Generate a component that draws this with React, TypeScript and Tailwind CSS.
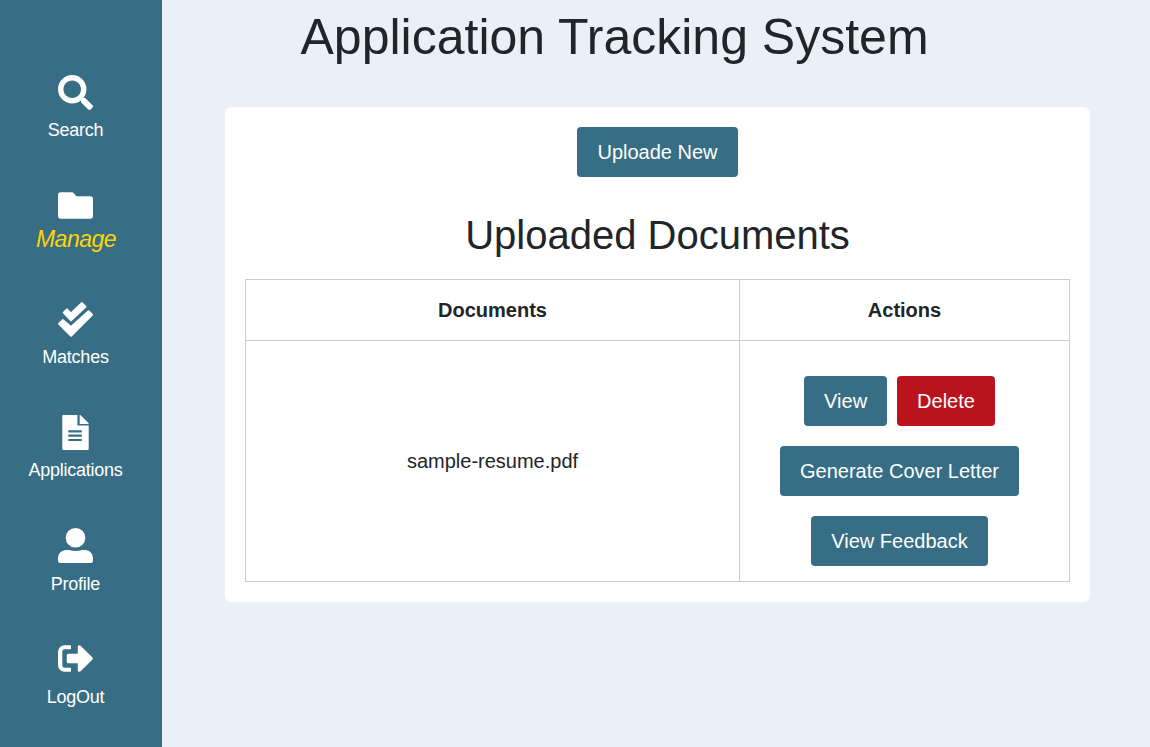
import type { ComponentType, ReactNode } from "react";
import { FaSearch } from "react-icons/fa";

type IconProps = { className?: string };

function FolderIcon({ className }: IconProps) {
  return (
    <svg viewBox="0 0 35 35" fill="currentColor" className={className}>
      <path d="M2.8 4.3H14.2Q15 4.3 15.6 4.9L18.4 8.3H32.3A2.7 2.7 0 0 1 35 11V28A2.7 2.7 0 0 1 32.3 30.7H2.7A2.7 2.7 0 0 1 0 28V7A2.7 2.7 0 0 1 2.8 4.3Z" />
    </svg>
  );
}

function DoubleCheckIcon({ className }: IconProps) {
  return (
    <svg
      viewBox="0 0 35 35"
      fill="currentColor"
      stroke="currentColor"
      strokeWidth="2"
      strokeLinejoin="round"
      className={className}
    >
      <path d="M5.7 10.6L8.9 7.4L13 11.5L24 1.1L27.4 4.7L13 18.4Z" />
      <path d="M1.1 21.8L4.7 18.1L13 24.9L30.6 9.3L34 12.8L13 33.8Z" />
    </svg>
  );
}

function FileIcon({ className }: IconProps) {
  return (
    <svg viewBox="0 0 35 35" fill="currentColor" className={className}>
      <path
        fillRule="evenodd"
        d="M5.3 0H19.4V10.6H30.7V34A1 1 0 0 1 29.7 35H5.3A1 1 0 0 1 4.3 34V1A1 1 0 0 1 5.3 0ZM10.3 15.2V17.5H23.8V15.2ZM10.3 19.4V21.7H23.8V19.4ZM10.3 23.9V26.1H23.8V23.9Z"
      />
      <path d="M21.7 0H22.4L30.7 8.2V8.9H21.7Z" />
    </svg>
  );
}

function UserIcon({ className }: IconProps) {
  return (
    <svg viewBox="0 0 35 35" fill="currentColor" className={className}>
      <circle cx="17.5" cy="9.8" r="9.8" />
      <path d="M8.2 22H11Q14 23.1 17.5 23.1T24 22H26.8C31.8 22 35 25.8 35 30.3V32.5A2.5 2.5 0 0 1 32.5 35H2.5A2.5 2.5 0 0 1 0 32.5V30.3C0 25.8 3.2 22 8.2 22Z" />
    </svg>
  );
}

function SignOutIcon({ className }: IconProps) {
  return (
    <svg viewBox="0 0 35 35" fill="currentColor" className={className}>
      <path d="M6.6 4.3H12.3Q13 4.3 13 5V7.4Q13 8.2 12.3 8.2H6.6A2.3 2.3 0 0 0 4.3 10.5V24.5A2.3 2.3 0 0 0 6.6 26.8H12.3Q13 26.8 13 27.5V30Q13 30.7 12.3 30.7H6.6A6.6 6.6 0 0 1 0 24.1V10.9A6.6 6.6 0 0 1 6.6 4.3Z" />
      <path d="M10.2 12.7H19.8V5.8C19.8 4.3 21.6 3.7 22.6 4.8L34.5 16.4Q35.3 17.5 34.5 18.5L22.6 30.3C21.6 31.3 19.8 30.7 19.8 29.2V22.2H10.2Q8.7 22.2 8.7 20.7V14.2Q8.7 12.7 10.2 12.7Z" />
    </svg>
  );
}

const items: { label: string; icon: ComponentType<IconProps>; active?: boolean }[] = [
  { label: "Search", icon: FaSearch },
  { label: "Manage", icon: FolderIcon, active: true },
  { label: "Matches", icon: DoubleCheckIcon },
  { label: "Applications", icon: FileIcon },
  { label: "Profile", icon: UserIcon },
  { label: "LogOut", icon: SignOutIcon },
];

function Sidebar() {
  return (
    <nav className="flex w-[162px] shrink-0 flex-col bg-[#376e86] pt-[75px] pr-[11px]">
      {items.map(({ label, icon: Icon, active }) => (
        <a key={label} className="flex h-[113.3px] shrink-0 flex-col items-center text-white">
          <Icon className="size-[35px]" />
          <span
            className={
              active
                ? "mt-0.5 pl-px text-[23px] leading-7 tracking-[-0.5px] text-[#ffd400] italic"
                : "mt-[6.4px] text-[18px] leading-7 tracking-[-0.25px]"
            }
          >
            {label}
          </span>
        </a>
      ))}
    </nav>
  );
}

function Button({ children, danger }: { children: ReactNode; danger?: boolean }) {
  return (
    <button
      className={`h-[50px] rounded-[4px] px-5 text-[20px] leading-[30px] whitespace-nowrap text-white ${
        danger ? "bg-[#ba131e]" : "bg-[#376e86]"
      }`}
    >
      {children}
    </button>
  );
}

export default function App() {
  return (
    <div className="flex h-[747px] w-[1150px] overflow-hidden bg-[#ebeff7] font-['Liberation_Sans',Arial,sans-serif] text-[#212529]">
      <Sidebar />
      <main className="flex-1 pl-[63px]">
        <h1 className="ml-[75.5px] pt-[7px] text-[50px] leading-[60px]">Application Tracking System</h1>
        <section className="mt-10 flex h-[495px] w-[865px] flex-col items-center rounded-[6px] bg-white p-5">
          <Button>Uploade New</Button>
          <h2 className="mt-[34px] text-[40px] leading-[48px]">Uploaded Documents</h2>
          <table className="mt-5 w-[825px] table-fixed border-collapse text-center text-[20px] leading-[30px]">
            <colgroup>
              <col className="w-[494px]" />
              <col className="w-[330px]" />
            </colgroup>
            <thead>
              <tr className="h-[61px]">
                <th className="border border-[#cccccc] p-0 font-bold">Documents</th>
                <th className="border border-[#cccccc] p-0 font-bold">Actions</th>
              </tr>
            </thead>
            <tbody>
              <tr className="h-[241px]">
                <td className="border border-[#cccccc] p-0">sample-resume.pdf</td>
                <td className="border border-[#cccccc] p-0 pt-5 pr-2.5">
                  <div className="flex flex-col items-center gap-5">
                    <div className="flex gap-2.5">
                      <Button>View</Button>
                      <Button danger>Delete</Button>
                    </div>
                    <Button>Generate Cover Letter</Button>
                    <Button>View Feedback</Button>
                  </div>
                </td>
              </tr>
            </tbody>
          </table>
        </section>
      </main>
    </div>
  );
}
